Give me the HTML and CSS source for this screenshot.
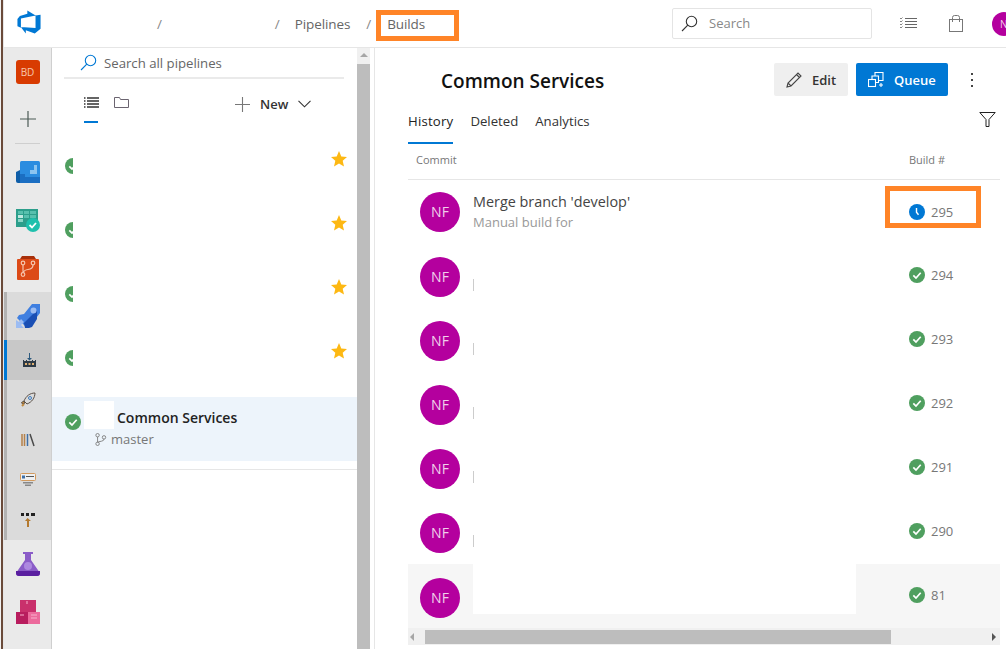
FILE: index.html
```html
<!DOCTYPE html>
<html lang="en">
<head>
<meta charset="utf-8">
<title>Builds - Pipelines</title>
<link rel="stylesheet" href="styles.css">
</head>
<body>
<div class="app">
  <div class="edge"></div>
  <div class="shell">
    <header class="topbar">
      <div class="logo-cell">
        <svg width="26" height="26" viewBox="0 0 18 18"><path d="M17 4v9.740l-4 3.280-6.200-2.260V17L3.290 12.410l10.230.8V4.440zm-3.410.49L7.850 1v2.290L2.690 4.800 1 6.970v4.930l2.410 1V6.570z" fill="#0078d4"/></svg>
      </div>
      <nav class="crumbs">
        <span class="sep sep-a">/</span>
        <span class="sep sep-b">/</span>
        <span class="crumb">Pipelines</span>
        <span class="sep sep-c">/</span>
        <span class="crumb">Builds</span>
      </nav>
      <div class="searchbox">
        <svg width="17" height="17" viewBox="0 0 17 17" fill="none" stroke="#333" stroke-width="1.100"><circle cx="10.500" cy="6.500" r="5.200"/><path d="M6.800 10.200 1 16"/></svg>
        <span>Search</span>
      </div>
      <div class="top-icon list-icon">
        <svg width="17" height="13" viewBox="0 0 17 13" fill="none" stroke="#666"><path d="M5 1.500h12M5 4.500h12M5 7.500h12M5 10.500h12"/><path d="M0 1l1 1 1.500-1.500M0 4l1 1 1.500-1.500M0 7l1 1 1.500-1.500M0 10l1 1 1.500-1.500" stroke-width=".8"/></svg>
      </div>
      <div class="top-icon bag-icon">
        <svg width="14" height="17" viewBox="0 0 14 17" fill="none" stroke="#777"><rect x=".5" y="4.500" width="13" height="12"/><path d="M3.500 7V2.500q0-2 2-2h3q2 0 2 2V7"/></svg>
      </div>
      <div class="avatar-small">N</div>
    </header>
    <div class="body">
      <aside class="rail">
        <div class="rail-item rail-org"><span class="org">BD</span></div>
        <div class="rail-item">
          <svg width="18" height="18" viewBox="0 0 18 18" stroke="#4b5a55" stroke-width="1.200"><path d="M9 1v16M1 9h16"/></svg>
        </div>
        <div class="rail-rule"></div>
        <div class="rail-item">
          <svg width="24" height="23" viewBox="0 0 24 23"><rect x="4" width="20" height="22" rx="1.500" fill="#2b8ce0"/><path d="M0 11l4-2v13H2q-2 0-2-2z" fill="#0f5ea8"/><path d="M4 22h20v-6H9v-3H4z" fill="#1b6ec2"/><path d="M9 13h5V9h4V4h3v9H9z" fill="#8cc4f0"/></svg>
        </div>
        <div class="rail-item">
          <svg width="24" height="24" viewBox="0 0 24 24"><rect y="1" width="22" height="18" fill="#2c9e8b"/><path d="M2 3h5v3H2zM8 3h5v3H8zM14 3h6v3h-6zM8 7h5v3H8zM14 7h6v3h-6z" fill="#58c0ae"/><path d="M2 7h5v3H2z" fill="#bfe8e0"/><path d="M2 11h5v3H2z" fill="#8ad4c6"/><circle cx="17" cy="17" r="7" fill="#1fc0ad"/><path d="M13.500 17l2.500 2.500 4-4.500" fill="none" stroke="#fff" stroke-width="1.800"/></svg>
        </div>
        <div class="rail-item">
          <svg width="22" height="24" viewBox="0 0 22 24"><path d="M3 3 5 0h12l2 3z" fill="#a8300a"/><rect y="3" width="22" height="21" rx="1" fill="#dc4a17"/><g fill="none" stroke="#f6c5ae" stroke-width="1.200"><circle cx="6" cy="7" r="1.800"/><circle cx="16" cy="7" r="1.800"/><circle cx="6" cy="18.500" r="1.800"/><path d="M6 9v7.700M16 9q0 4-5 4.500-4 .5-4.500 3"/></g></svg>
        </div>
        <div class="rail-group">
          <div class="rail-item rail-main">
            <svg width="24" height="24" viewBox="0 0 24 24"><path d="M16 0h8v9L14 22H9L1 14l2-3 5-1z" fill="#3f7fe0"/><path d="M8 19 21 6v9l-5 8-3 1H9z" fill="#1a4fb4"/><circle cx="17.500" cy="6.500" r="3" fill="#9dbcf0"/><path d="M0 16v8h8l-3-3 3-3-3-3-2 3z" fill="#9cbcf2"/></svg>
          </div>
          <div class="rail-sub rail-active">
            <svg width="15" height="15" viewBox="0 0 15 15"><path d="M7 0h1v5h2L7.500 7.500 5 5h2z" fill="#2d5a7e"/><path d="M1 7h1v1h2V7h1v1h5V7h1v1h2V7h1v7H1z" fill="#2d3a46"/><path d="M3 10h2v2H3zM6.500 10h2v2h-2zM10 10h2v2h-2z" fill="#e0b070"/></svg>
          </div>
          <div class="rail-sub">
            <svg width="16" height="16" viewBox="0 0 16 16" fill="none" stroke="#5a5048"><path d="M4 9c2-5 6-8 11-8-.2 5-3 9-8 11z"/><circle cx="10" cy="6" r="1.500" stroke="#3d7cc0"/><path d="M4 9 1.500 10.500l1 1.500 2.500-1z" fill="#c08a40"/><path d="M2 14l2-2" stroke="#c08a40" stroke-width="2"/></svg>
          </div>
          <div class="rail-sub">
            <svg width="14" height="14" viewBox="0 0 14 14" fill="none"><path d="M1 1v12M3.500 1v12" stroke="#b5814a" stroke-width="1.500"/><path d="M6.500 1v12" stroke="#3e6fa6" stroke-width="1.500"/><path d="M9 1l4 12" stroke="#4a4a4a" stroke-width="1.500"/></svg>
          </div>
          <div class="rail-sub">
            <svg width="16" height="14" viewBox="0 0 16 14"><rect x=".5" y=".5" width="15" height="7" rx="1" fill="#eef0f2" stroke="#d29a5e"/><path d="M2 2.500h3v3H2z" fill="#3e6fa6"/><path d="M6 3h8v1H6z" fill="#555"/><path d="M3 9h10v1.500H3zM5 11.500h6V13H5z" fill="#888"/></svg>
          </div>
          <div class="rail-sub">
            <svg width="14" height="14" viewBox="0 0 14 14"><path d="M0 0h3v3H0zM5 0h3v3H5zM10 0h4v3h-4z" fill="#222"/><path d="M6.500 5 4 8h2v6h2V8h2z" fill="#b47a30"/></svg>
          </div>
        </div>
        <div class="rail-item">
          <svg width="24" height="24" viewBox="0 0 24 24"><path d="M7 0h10v2h-2v6l9 13q0 3-3 3H3q-3 0-3-3L9 8V2H7z" fill="#8a5cc8"/><path d="M0 19h24v2q0 3-3 3H3q-3 0-3-3z" fill="#5a1fa0"/><circle cx="12" cy="14" r="4" fill="#ad88e0"/></svg>
        </div>
        <div class="rail-item">
          <svg width="24" height="24" viewBox="0 0 24 24"><rect x="4" width="16" height="12" fill="#c9306c"/><rect y="12" width="12" height="12" fill="#b81d5e"/><rect x="12" y="12" width="12" height="12" fill="#ec6a9c"/><path d="M11 1v3M4 15h4M15 15h6M15 18h6" stroke="#f8b0cc" fill="none"/></svg>
        </div>
      </aside>
      <section class="pipelines">
        <div class="pipe-scroll">
          <div class="pipe-search">
            <svg width="17" height="17" viewBox="0 0 17 17" fill="none" stroke="#0078d4" stroke-width="1.100"><circle cx="10.500" cy="6.500" r="5.200"/><path d="M6.800 10.200 1 16"/></svg>
            <span>Search all pipelines</span>
          </div>
          <div class="pipe-tools">
            <div class="view-tab view-tab-on">
              <svg width="15" height="11" viewBox="0 0 15 11" fill="none" stroke="#333" stroke-width="1.300"><path d="M3 1h12M3 4h12M3 7h12M3 10h12M0 1h1.500M0 4h1.500M0 7h1.500M0 10h1.500"/></svg>
            </div>
            <div class="view-tab">
              <svg width="15" height="11" viewBox="0 0 15 11" fill="none" stroke="#6b6470"><path d="M.5 10.500V.5h5l1 2h8v8z"/></svg>
            </div>
            <div class="new-btn">
              <svg width="15" height="15" viewBox="0 0 15 15" stroke="#777" stroke-width="1.100"><path d="M7.500 0v15M0 7.500h15"/></svg>
              <span>New</span>
              <svg width="13" height="8" viewBox="0 0 13 8" fill="none" stroke="#333" stroke-width="1.100"><path d="M.5.800 6.500 6.800l6-6"/></svg>
            </div>
          </div>
          <ul class="pipe-list">
            <li class="pipe-row">
              <span class="clip-check"><svg class="check" viewBox="0 0 16 16"><circle cx="8" cy="8" r="8"/><path d="M4.300 8.300 7 11l4.700-5.200"/></svg></span>
              <svg class="star" viewBox="0 0 16 16"><path d="M8 0l2.300 5.500 5.700.5-4.300 3.800 1.300 5.700L8 12.500l-5 3 1.300-5.700L0 6l5.700-.5z"/></svg>
            </li>
            <li class="pipe-row">
              <span class="clip-check"><svg class="check" viewBox="0 0 16 16"><circle cx="8" cy="8" r="8"/><path d="M4.300 8.300 7 11l4.700-5.200"/></svg></span>
              <svg class="star" viewBox="0 0 16 16"><path d="M8 0l2.300 5.500 5.700.5-4.300 3.800 1.300 5.700L8 12.500l-5 3 1.300-5.700L0 6l5.700-.5z"/></svg>
            </li>
            <li class="pipe-row">
              <span class="clip-check"><svg class="check" viewBox="0 0 16 16"><circle cx="8" cy="8" r="8"/><path d="M4.300 8.300 7 11l4.700-5.200"/></svg></span>
              <svg class="star" viewBox="0 0 16 16"><path d="M8 0l2.300 5.500 5.700.5-4.300 3.800 1.300 5.700L8 12.500l-5 3 1.300-5.700L0 6l5.700-.5z"/></svg>
            </li>
            <li class="pipe-row">
              <span class="clip-check"><svg class="check" viewBox="0 0 16 16"><circle cx="8" cy="8" r="8"/><path d="M4.300 8.300 7 11l4.700-5.200"/></svg></span>
              <svg class="star" viewBox="0 0 16 16"><path d="M8 0l2.300 5.500 5.700.5-4.300 3.800 1.300 5.700L8 12.500l-5 3 1.300-5.700L0 6l5.700-.5z"/></svg>
            </li>
            <li class="pipe-row pipe-row-on">
              <span class="open-check"><svg class="check" viewBox="0 0 16 16"><circle cx="8" cy="8" r="8"/><path d="M4.300 8.300 7 11l4.700-5.200"/></svg></span>
              <span class="patch"></span>
              <div class="pipe-info">
                <div class="pipe-name">Common Services</div>
                <div class="pipe-branch">
                  <svg width="12" height="15" viewBox="0 0 14 15" fill="none" stroke="#777"><circle cx="3" cy="2.500" r="2"/><circle cx="3" cy="12.500" r="2"/><circle cx="10.500" cy="5" r="2"/><path d="M3 4.500v6M10.500 7q0 2-3 2.500-3.500.5-4.500 1.500"/></svg>
                  <span>master</span>
                </div>
              </div>
            </li>
          </ul>
          <div class="pipe-end"></div>
        </div>
        <div class="vscroll">
          <div class="vscroll-up"></div>
          <div class="vscroll-thumb"></div>
        </div>
      </section>
      <main class="detail">
        <div class="detail-head">
          <h1>Common Services</h1>
          <button class="btn btn-plain">
            <svg width="16" height="16" viewBox="0 0 16 16" fill="none" stroke="#444" stroke-width="1.100"><path d="M1 15l1-4L12 1l3 3L5 14zM2 11l3 3M10.500 2.500l3 3"/></svg>
            <span>Edit</span>
          </button>
          <button class="btn btn-primary">
            <svg width="16" height="16" viewBox="0 0 16 16" fill="none" stroke="#fff" stroke-width="1.100"><rect x=".5" y="7.500" width="7" height="7"/><path d="M4 7.500V4h6.500v6.500H7.500"/><path d="M7 4V.5h8v8h-4.500"/><path d="M13 11v4M11 13h4"/></svg>
            <span>Queue</span>
          </button>
          <div class="kebab"><i></i><i></i><i></i></div>
        </div>
        <div class="tabs">
          <span class="tab tab-on">History</span>
          <span class="tab">Deleted</span>
          <span class="tab">Analytics</span>
          <svg class="filter" width="17" height="15" viewBox="0 0 17 15" fill="none" stroke="#222"><path d="M.8.500h15.400L10 7.500V14.500L7 14.500V7.500z"/></svg>
        </div>
        <div class="grid-head"><span>Commit</span><span class="col-num">Build #</span></div>
        <div class="rows">
          <div class="row row-first">
            <div class="avatar">NF</div>
            <div class="row-text"><div class="row-title">Merge branch 'develop'</div><div class="row-sub">Manual build for</div></div>
            <div class="row-num">
              <svg class="state" viewBox="0 0 16 16"><circle cx="8" cy="8" r="8" fill="#0078d4"/><path d="M7.500 4v4.300l2 2.500" fill="none" stroke="#fff" stroke-width="1.400"/></svg>
              <span>295</span>
            </div>
          </div>
          <div class="row"><div class="avatar">NF</div><i class="tick"></i><div class="row-num"><svg class="state check" viewBox="0 0 16 16"><circle cx="8" cy="8" r="8"/><path d="M4.300 8.300 7 11l4.700-5.200"/></svg><span>294</span></div></div>
          <div class="row"><div class="avatar">NF</div><i class="tick"></i><div class="row-num"><svg class="state check" viewBox="0 0 16 16"><circle cx="8" cy="8" r="8"/><path d="M4.300 8.300 7 11l4.700-5.200"/></svg><span>293</span></div></div>
          <div class="row"><div class="avatar">NF</div><i class="tick"></i><div class="row-num"><svg class="state check" viewBox="0 0 16 16"><circle cx="8" cy="8" r="8"/><path d="M4.300 8.300 7 11l4.700-5.200"/></svg><span>292</span></div></div>
          <div class="row"><div class="avatar">NF</div><i class="tick"></i><div class="row-num"><svg class="state check" viewBox="0 0 16 16"><circle cx="8" cy="8" r="8"/><path d="M4.300 8.300 7 11l4.700-5.200"/></svg><span>291</span></div></div>
          <div class="row"><div class="avatar">NF</div><i class="tick"></i><div class="row-num"><svg class="state check" viewBox="0 0 16 16"><circle cx="8" cy="8" r="8"/><path d="M4.300 8.300 7 11l4.700-5.200"/></svg><span>290</span></div></div>
          <div class="row row-hover"><div class="avatar">NF</div><i class="tick"></i><div class="row-patch"></div><div class="row-num"><svg class="state check" viewBox="0 0 16 16"><circle cx="8" cy="8" r="8"/><path d="M4.300 8.300 7 11l4.700-5.200"/></svg><span>81</span></div></div>
        </div>
        <div class="hscroll">
          <span class="arrow arrow-left"></span>
          <div class="hscroll-thumb"></div>
          <span class="arrow arrow-right"></span>
        </div>
      </main>
    </div>
  </div>
  <div class="callout callout-builds"></div>
  <div class="callout callout-build"></div>
</div>
</body>
</html>
```
FILE: styles.css
```css
* { box-sizing: border-box; }
html, body { margin: 0; height: 100%; overflow: hidden; background: #fff; }
body { font-family: "Open Sans", "Noto Sans", sans-serif; font-size: 13px; color: #222; }
svg { display: block; flex: none; }
ul { list-style: none; margin: 0; padding: 0; }

.app { position: relative; display: flex; width: 1006px; height: 649px; overflow: hidden; }
.edge { width: 4px; flex: none; background: linear-gradient(90deg, #f2f2f2 0 1px, #6a4a3a 1px 3px, #e6e6e6 3px); }
.shell { flex: 1; min-width: 0; display: flex; flex-direction: column; }

.topbar { height: 48px; flex: none; display: flex; align-items: center; border-bottom: 1px solid #e6e6e6; }
.logo-cell { width: 47px; flex: none; padding-left: 12px; margin-top: -4px; }
.crumbs { width: 621px; flex: none; display: flex; align-items: center; color: #666; font-size: 13.5px; letter-spacing: -.1px; }
.sep { color: #888; }
.sep-a { margin-left: 106px; }
.sep-b { margin-left: 113px; }
.sep-b + .crumb { margin-left: 15px; }
.sep-c { margin-left: 16px; }
.sep-c + .crumb { margin-left: 16px; }
.searchbox { width: 200px; height: 31px; flex: none; margin-top: -1px; display: flex; align-items: center; gap: 11px; padding-left: 8px; border: 1px solid #e4e4e4; border-radius: 2px; color: #888; font-size: 13px; }
.top-icon { display: flex; justify-content: center; flex: none; }
.list-icon { margin-left: 28px; }
.bag-icon { margin-left: 32px; }
.avatar-small { width: 24px; height: 24px; margin-left: 29px; flex: none; border-radius: 50%; background: #b4009e; color: #f0d0ea; font-size: 10px; line-height: 24px; padding-left: 8px; }

.body { flex: 1; min-height: 0; display: flex; }
.rail { width: 48px; flex: none; background: #eaeaea; border-right: 1px solid #cfcfcf; display: flex; flex-direction: column; }
.rail-item { height: 48px; flex: none; display: flex; align-items: center; justify-content: center; }
.rail-org { height: 47px; }
.rail-rule { height: 1px; margin: 0 11px 4px; background: #cfcfcf; flex: none; }
.org { width: 24px; height: 24px; border-radius: 3px; background: #d83b01; color: #f7c6ae; font-size: 10px; text-align: center; line-height: 24px; }
.rail-group { background: #dbdbdb; border-left: 3px solid #b3b3b3; }
.rail-main { margin-left: -3px; }
.rail-sub { height: 40px; display: flex; align-items: center; justify-content: center; margin-left: -3px; }
.rail-active { background: #c8c8c8; border-left: 3px solid #0078d4; margin-left: -3px; }

.pipelines { width: 323px; flex: none; display: flex; border-right: 1px solid #e6e6e6; }
.pipe-scroll { width: 305px; flex: none; }
.pipe-search { height: 31px; margin: 0 13px 0 12px; display: flex; align-items: center; gap: 7px; padding: 0 0 0 16px; border-bottom: 2px solid #eaeaea; color: #666; font-size: 13.2px; }
.pipe-tools { height: 48px; display: flex; align-items: flex-start; padding: 18px 0 0 32px; }
.view-tab { width: 30px; height: 30px; position: relative; }
.view-tab-on::after { content: ""; position: absolute; left: 0; top: 24px; width: 14px; height: 2px; background: #0078d4; }
.new-btn { display: flex; align-items: center; gap: 10px; margin-left: 91px; margin-top: -2px; font-size: 13px; font-weight: 600; color: #333; }
.pipe-list { margin-top: 14px; }
.pipe-row { height: 64px; display: flex; align-items: center; padding-left: 13px; position: relative; }
.clip-check { display: block; width: 8px; height: 16px; overflow: hidden; margin-top: -14px; }
.open-check { display: block; margin-top: -14px; }
.check { width: 16px; height: 16px; }
.check circle { fill: #4f9f5f; }
.check path { fill: none; stroke: #fff; stroke-width: 1.700; }
.star { position: absolute; left: 279px; top: 10px; width: 16px; height: 16px; fill: #fdb813; }
.pipe-row-on { background: #edf4fb; }
.pipe-info { margin: -2px 0 0 36px; }
.pipe-name { font-size: 14px; line-height: 21px; font-weight: 600; color: #222; white-space: nowrap; }
.patch { position: absolute; left: 32px; top: 4px; width: 30px; height: 28px; background: #fff; }
.pipe-branch { display: flex; align-items: center; gap: 4px; margin-left: -22px; margin-top: 1px; line-height: 20px; color: #777; font-size: 13px; }
.pipe-end { height: 9px; border-bottom: 1px solid #e6e6e6; }
.vscroll { width: 14px; background: #f0f0f0; display: flex; flex-direction: column; margin-right: 4px; }
.vscroll-up { height: 16px; position: relative; }
.vscroll-up::after { content: ""; position: absolute; left: 3px; top: 5px; border: 4px solid transparent; border-bottom-color: #a6a6a6; border-top: 0; }
.vscroll-thumb { flex: 1; background: #bdbdbd; }

.detail { flex: 1; min-width: 0; padding: 15px 6px 0 33px; display: flex; flex-direction: column; }
.detail-head { display: flex; align-items: center; height: 33px; flex: none; }
h1 { margin: 2px 0 0 33px; width: 333px; font-size: 19px; font-weight: 600; color: #111; }
.btn { height: 33px; border: 0; border-radius: 2px; display: flex; align-items: center; gap: 10px; font: 600 13px "Open Sans", "Noto Sans", sans-serif; padding: 0 12px; }
.btn-plain { width: 74px; background: #efefef; color: #333; }
.btn-primary { width: 92px; margin-left: 8px; background: #0078d4; color: #fff; }
.kebab { margin-left: 23px; display: flex; flex-direction: column; gap: 4px; }
.kebab i { width: 2px; height: 2px; background: #444; display: block; }
.tabs { position: relative; height: 48px; flex: none; display: flex; align-items: flex-start; gap: 17px; padding-top: 16px; font-size: 13.2px; color: #333; }
.tab { height: 32px; }
.tab-on { color: #222; font-weight: 500; letter-spacing: .2px; border-bottom: 2px solid #0078d4; }
.filter { position: absolute; right: 4px; top: 16px; }
.grid-head { height: 36px; flex: none; display: flex; justify-content: space-between; padding: 8px 55px 0 8px; font-size: 11px; color: #777; border-bottom: 1px solid #e6e6e6; }
.rows { flex: none; height: 448px; }
.row { position: relative; height: 64px; display: flex; align-items: center; padding-left: 12px; }
.row-first { height: 63px; }
.row-hover { height: 65px; background: #f6f6f6; box-shadow: inset 0 1px #fff; }
.avatar { width: 40px; height: 40px; flex: none; border-radius: 50%; background: #b4009e; color: #f0d0ea; font-size: 14px; text-align: center; line-height: 40px; }
.row:not(.row-first) .avatar { margin-top: 4px; }
.row-text { margin-left: 13px; }
.row-title { font-size: 14.4px; line-height: 20px; color: #444; }
.row-sub { font-size: 13px; line-height: 20px; color: #999; }
.tick { width: 1px; height: 12px; margin: 20px 0 0 13px; background: #ccc; }
.row-patch { position: absolute; left: 65px; top: 0; width: 383px; height: 51px; background: #fff; }
.row-num { position: absolute; left: 501px; top: 23px; display: flex; align-items: center; gap: 6px; font-size: 13px; color: #777; }
.state { width: 16px; height: 16px; }
.hscroll { height: 17px; flex: none; background: #f0f0f0; display: flex; align-items: center; }
.arrow { width: 0; height: 0; border: 4px solid transparent; }
.arrow-left { margin-left: 2px; border-right-color: #a6a6a6; border-left: 0; }
.hscroll-thumb { width: 466px; height: 14px; margin-left: 11px; background: #bdbdbd; }
.arrow-right { margin-left: auto; margin-right: 4px; border-left-color: #555; border-right: 0; }

.callout { position: absolute; border: 5px solid #ff8427; }
.callout-builds { left: 376px; top: 10px; width: 83px; height: 31px; }
.callout-build { left: 885px; top: 186px; width: 96px; height: 42px; }
```
